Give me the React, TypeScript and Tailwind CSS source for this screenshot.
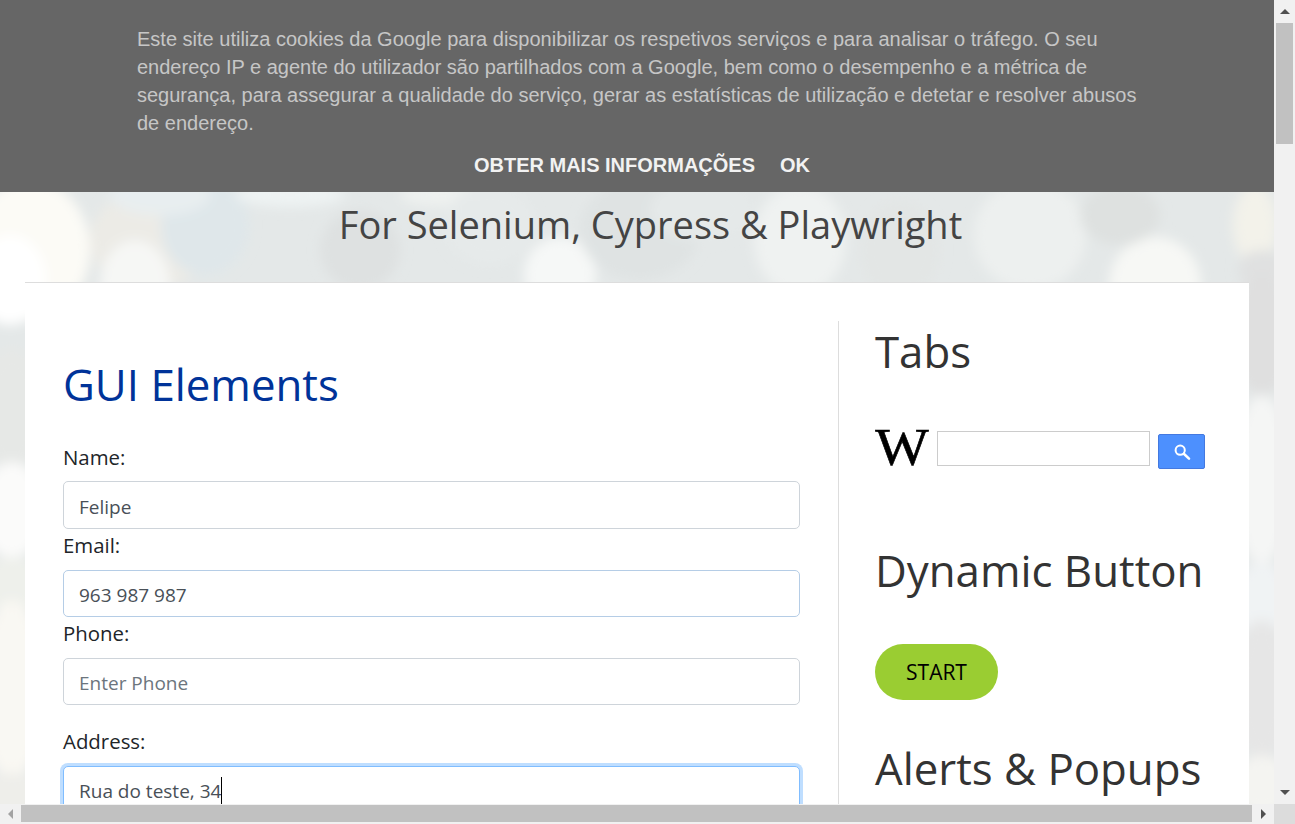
import React from "react";

const OS = "font-['Open_Sans',sans-serif]";

function Bokeh() {
  const shapes: [number, number, number, number, string][] = [
    [30, 250, 60, 70, "#fcfbf6"],
    [10, 280, 36, 45, "#ffffff"],
    [150, 240, 60, 50, "#ecebe6"],
    [205, 225, 44, 50, "#dfe7ea"],
    [135, 285, 35, 45, "#f6f7f5"],
    [160, 195, 50, 20, "#e8eef0"],
    [290, 195, 55, 12, "#eef3f3"],
    [360, 250, 40, 40, "#dee1e1"],
    [440, 195, 40, 12, "#eef1ef"],
    [490, 225, 45, 40, "#e6eaea"],
    [560, 275, 36, 38, "#f6f8f7"],
    [640, 230, 60, 50, "#dfe3e3"],
    [800, 240, 46, 55, "#eff2f1"],
    [700, 210, 50, 30, "#e5e9e9"],
    [900, 250, 40, 50, "#e3e6e5"],
    [1030, 235, 56, 55, "#edf0ef"],
    [1155, 285, 46, 48, "#f7f8f5"],
    [1120, 215, 40, 30, "#dee1e0"],
    [1255, 225, 22, 40, "#f3f2ea"],
    [1262, 270, 24, 20, "#e0e1e1"],
    [12, 410, 32, 62, "#e6e8e6"],
    [12, 510, 32, 48, "#fbfbfa"],
    [12, 585, 32, 28, "#eef0eb"],
    [12, 690, 32, 90, "#f9f8f3"],
    [12, 795, 32, 22, "#eeeeea"],
    [1262, 335, 28, 60, "#dfdfdf"],
    [1262, 480, 28, 85, "#f5f6f5"],
    [1262, 600, 28, 38, "#f0f3f4"],
    [1262, 690, 28, 70, "#e6e6e6"],
    [1262, 785, 28, 30, "#f4f4f1"],
  ];
  return (
    <svg className="absolute inset-0 w-full h-full" viewBox="0 0 1274 804" preserveAspectRatio="none">
      <defs>
        <filter id="soft" x="-30%" y="-30%" width="160%" height="160%">
          <feGaussianBlur stdDeviation="6" />
        </filter>
      </defs>
      <rect width="1274" height="804" fill="#e4e8e8" />
      <g filter="url(#soft)">
        {shapes.map(([cx, cy, rx, ry, f], i) => (
          <ellipse key={i} cx={cx} cy={cy} rx={rx} ry={ry} fill={f} />
        ))}
      </g>
    </svg>
  );
}

function Field({ label, value, placeholder, cls, gap, h }: { label: string; value?: string; placeholder?: string; cls: string; gap: string; h: string }) {
  return (
    <div>
      <div className={`text-[20.4px] leading-[30px] text-[#212529] ${gap}`}>{label}</div>
      <div className={`w-[737px] bg-white rounded-[5px] border px-[15px] text-[19px] ${h} ${cls} ${value ? "text-[#495057]" : "text-[#6c757d]"}`}>
        {value ?? placeholder}
      </div>
    </div>
  );
}

export default function App() {
  return (
    <div className={`h-screen w-full overflow-hidden flex flex-col ${OS}`}>
      <div className="flex flex-1 min-h-0">
        <div className="relative flex-1 min-w-0 overflow-hidden">
          <Bokeh />
          <div className="relative flex flex-col h-full">
            <div className="h-[192px] shrink-0 bg-[#666666] font-['Liberation_Sans',sans-serif]">
              <p className="pl-[137px] pr-[137px] pt-[25px] text-[20px] leading-[28px] text-[#c6c6c6]">
                Este site utiliza cookies da Google para disponibilizar os respetivos serviços e para analisar o tráfego. O seu endereço IP e agente do utilizador são partilhados com a Google, bem como o desempenho e a métrica de segurança, para assegurar a qualidade do serviço, gerar as estatísticas de utilização e detetar e resolver abusos de endereço.
              </p>
              <div className="flex justify-center gap-[25px] mt-[14px] pl-[10px] text-[20px] leading-[28px] font-bold text-[#f2f2f2]">
                <span>OBTER MAIS INFORMAÇÕES</span>
                <span>OK</span>
              </div>
            </div>
            <div className="h-[90px] shrink-0 text-center pl-[27px] text-[38px] leading-[64px] text-[#444444]">
              For Selenium, Cypress &amp; Playwright
            </div>
            <div className="mx-[25px] flex-1 min-h-0 bg-white border-t border-[#dddddd] flex">
              <div className="w-[813px] shrink-0 pt-[69px] pl-[38px]">
                <h2 className="text-[43.8px] leading-[64px] text-[#003399] mb-[26px]">GUI Elements</h2>
                <Field label="Name:" value="Felipe" cls="border-[#ced4da] leading-[50px]" gap="mb-[9px]" h="h-[48px]" />
                <div className="h-[1px]" />
                <Field label="Email:" value="963 987 987" cls="border-[#b5cde6] leading-[49px]" gap="mb-[10px]" h="h-[47px]" />
                <div className="h-[1px]" />
                <Field label="Phone:" placeholder="Enter Phone" cls="border-[#ced4da] leading-[49px]" gap="mb-[10px]" h="h-[47px]" />
                <div className="h-[21px]" />
                <div className="text-[20.4px] leading-[30px] text-[#212529]">Address:</div>
                <div className="mt-[10px] h-[48px] w-[737px] bg-white rounded-[5px] border border-[#80bdff] ring-[3px] ring-[#bfdeff] px-[15px] text-[19px] leading-[48px] text-[#495057] flex items-start">
                  <span>Rua do teste, 34</span>
                  <span className="w-px h-[27px] mt-[10px] bg-black" />
                </div>
              </div>
              <div className="mt-[38px] flex-1 border-l border-[#dddddd] pl-[36px]">
                <h2 className="text-[43.8px] leading-[60px] text-[#333333]">Tabs</h2>
                <div className="flex items-start mt-[49px] h-[60px]">
                  <span className="w-[54px] h-[36px] flex items-center justify-center font-['Liberation_Serif',serif] text-[52px] leading-[36px] text-black scale-x-[1.09] [-webkit-text-stroke:0.6px_black]">W</span>
                  <div className="ml-[8px] w-[213px] h-[35px] mt-[1px] border border-[#cccccc] bg-white" />
                  <div className="ml-[8px] mt-[4px] w-[47px] h-[35px] rounded-[2px] border border-[#4479e0] bg-[#4d90fe] flex items-center justify-center">
                    <svg width="18" height="18" viewBox="0 0 18 18" fill="none">
                      <circle cx="7.2" cy="7.2" r="4.6" stroke="white" strokeWidth="2" />
                      <path d="M10.8 10.8 L16 15.6" stroke="white" strokeWidth="2.6" strokeLinecap="round" />
                    </svg>
                  </div>
                </div>
                <h2 className="mt-[49px] text-[43.8px] leading-[62px] text-[#333333]">Dynamic Button</h2>
                <button className="mt-[43px] block w-[123px] h-[56px] rounded-[28px] bg-[#9acd32] pt-[2px] text-[21px] text-black">START</button>
                <h2 className="mt-[37px] text-[43.8px] leading-[62px] text-[#333333]">Alerts &amp; Popups</h2>
              </div>
            </div>
          </div>
        </div>
        <div className="w-[21px] shrink-0 bg-[#f1f1f1] flex flex-col items-center pt-[9px]">
          <svg width="10" height="5" viewBox="0 0 10 5" className="shrink-0"><path d="M5 0 L10 5 H0 Z" fill="#505050" /></svg>
          <div className="mt-[9px] w-[17px] h-[121px] bg-[#c1c1c1]" />
          <div className="flex-1" />
          <svg width="10" height="5" viewBox="0 0 10 5" className="shrink-0 mb-[9px]"><path d="M0 0 H10 L5 5 Z" fill="#505050" /></svg>
        </div>
      </div>
      <div className="h-[20px] shrink-0 flex items-start bg-[#f1f1f1]">
        <div className="w-[21px] h-full flex items-center justify-center"><svg width="5" height="10" viewBox="0 0 5 10"><path d="M5 0 V10 L0 5 Z" fill="#a3a3a3" /></svg></div>
        <div className="w-[1231px] h-[17px] mt-px bg-[#c1c1c1]" />
        <div className="flex-1 h-full flex items-center justify-center"><svg width="5" height="10" viewBox="0 0 5 10"><path d="M0 0 L5 5 L0 10 Z" fill="#505050" /></svg></div>
        <div className="w-[21px] h-full bg-[#dcdcdc]" />
      </div>
    </div>
  );
}
